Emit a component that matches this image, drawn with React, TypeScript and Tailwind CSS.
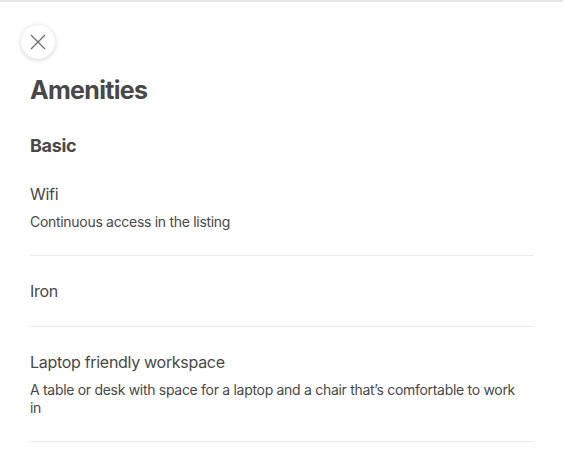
import React from 'react';

interface Amenity {
  name: string;
  description?: string;
}

const basic: Amenity[] = [
  { name: 'Wifi', description: 'Continuous access in the listing' },
  { name: 'Iron' },
  {
    name: 'Laptop friendly workspace',
    description: "A table or desk with space for a laptop and a chair that\u2019s comfortable to work in",
  },
];

const CloseIcon = () => (
  <svg width="16" height="16" viewBox="0 0 16 16" fill="none" stroke="#6b6b6b" strokeWidth="1.2">
    <path d="M1 1 L15 15 M15 1 L1 15" />
  </svg>
);

export default function App() {
  return (
    <div
      className="min-h-[463px] w-[563px] bg-white border-t-2 border-[#e6e6e6] text-[#484848]"
      style={{ fontFamily: 'Inter, "Noto Sans", sans-serif' }}
    >
      <div className="pl-[30px] pr-[29px]">
        <button className="mt-[23px] -ml-[9px] flex h-[34px] w-[34px] items-center justify-center rounded-full bg-white shadow-[0_1px_5px_rgba(0,0,0,0.18)]">
          <CloseIcon />
        </button>
        <h1 className="mt-[16px] text-[25px] font-bold leading-[30px] tracking-[-0.7px]">Amenities</h1>
        <h2 className="mt-[29px] text-[18px] font-bold leading-[24px] tracking-[-0.3px]">Basic</h2>
        <div className="mt-[1px]">
          {basic.map((a) => (
            <div key={a.name} className="border-b border-[#ebebeb] py-6">
              <div className="text-[16px] leading-[22px] tracking-[-0.3px]">{a.name}</div>
              {a.description && (
                <div className="mt-2 max-w-[496px] text-[14px] leading-[18px] tracking-[-0.3px]">
                  {a.description}
                </div>
              )}
            </div>
          ))}
        </div>
      </div>
    </div>
  );
}
